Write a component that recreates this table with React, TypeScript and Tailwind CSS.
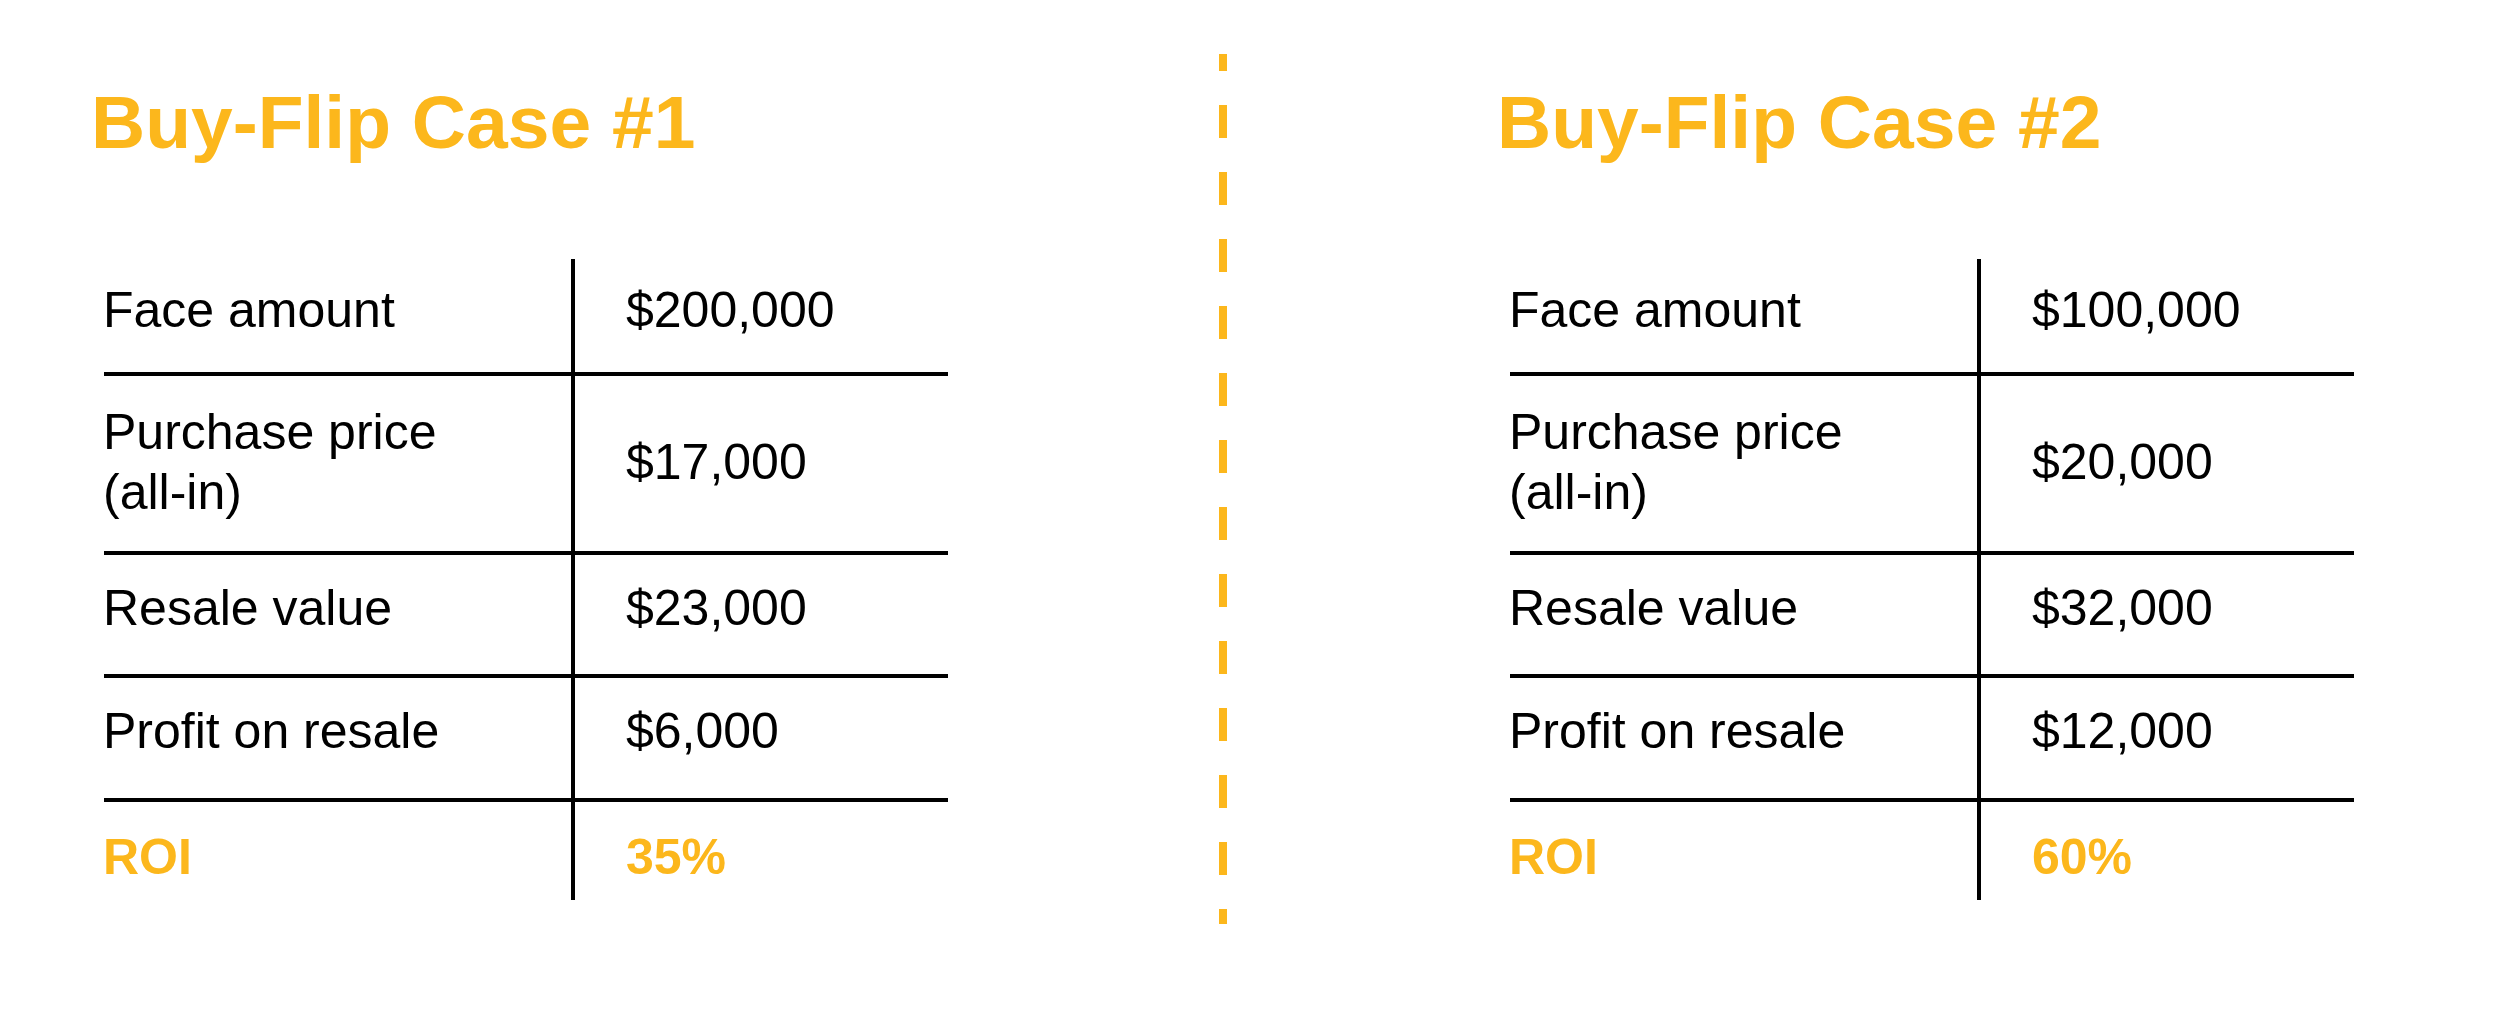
const gold = "text-[#fcb71c]"

type Row = {
  label: string[]
  value: string
  h: string
  pad: string
  roi?: boolean
}

const caseOne: Row[] = [
  { label: ["Face amount"], value: "$200,000", h: "h-[117px]", pad: "pb-[12px]" },
  { label: ["Purchase price", "(all-in)"], value: "$17,000", h: "h-[179px]", pad: "pb-[4px]" },
  { label: ["Resale value"], value: "$23,000", h: "h-[123px]", pad: "pb-[14px]" },
  { label: ["Profit on resale"], value: "$6,000", h: "h-[124px]", pad: "pb-[14px]" },
  { label: ["ROI"], value: "35%", h: "h-[98px]", pad: "pt-[12px]", roi: true },
]

const caseTwo: Row[] = [
  { label: ["Face amount"], value: "$100,000", h: "h-[117px]", pad: "pb-[12px]" },
  { label: ["Purchase price", "(all-in)"], value: "$20,000", h: "h-[179px]", pad: "pb-[4px]" },
  { label: ["Resale value"], value: "$32,000", h: "h-[123px]", pad: "pb-[14px]" },
  { label: ["Profit on resale"], value: "$12,000", h: "h-[124px]", pad: "pb-[14px]" },
  { label: ["ROI"], value: "60%", h: "h-[98px]", pad: "pt-[12px]", roi: true },
]

function CaseTable({ title, rows }: { title: string; rows: Row[] }) {
  return (
    <div className="w-[857px] pt-[85px]">
      {/* Title */}
      <h2 className={`h-[75px] text-[75px] leading-[75px] font-bold ${gold}`}>{title}</h2>

      {/* Table */}
      <div className="mt-[99px] ml-[13px] w-[844px]">
        {rows.map((row, i) => {
          const last = i === rows.length - 1
          const tone = row.roi ? `font-bold ${gold}` : "text-black"
          return (
            <div
              key={row.value}
              className={`flex ${row.h} ${last ? "" : "border-b-4 border-black"}`}
            >
              <div className={`flex w-[467px] items-center ${row.pad} ${tone}`}>
                <div className="-ml-[1px] text-[50px] leading-[60px]">
                  {row.label.map((l) => (
                    <div key={l}>{l}</div>
                  ))}
                </div>
              </div>
              <div className={`flex flex-1 items-center border-l-4 border-black pl-[51px] ${row.pad} ${tone}`}>
                <div className="text-[50px] leading-[60px]">{row.value}</div>
              </div>
            </div>
          )
        })}
      </div>
    </div>
  )
}

export default function App() {
  return (
    <div
      className="flex h-[1010px] w-[2500px] items-start bg-white pl-[91px]"
      style={{ fontFamily: '"Liberation Sans", Arial, sans-serif' }}
    >
      <CaseTable title="Buy-Flip Case #1" rows={caseOne} />

      {/* Dashed divider */}
      <svg className="ml-[271px] mt-[54px] shrink-0" width="8" height="870" viewBox="0 0 8 870">
        <line
          x1="4"
          y1="0"
          x2="4"
          y2="870"
          stroke="#fcb71c"
          strokeWidth="8"
          strokeDasharray="33 34"
          strokeDashoffset="16"
        />
      </svg>

      <div className="ml-[270px]">
        <CaseTable title="Buy-Flip Case #2" rows={caseTwo} />
      </div>
    </div>
  )
}
